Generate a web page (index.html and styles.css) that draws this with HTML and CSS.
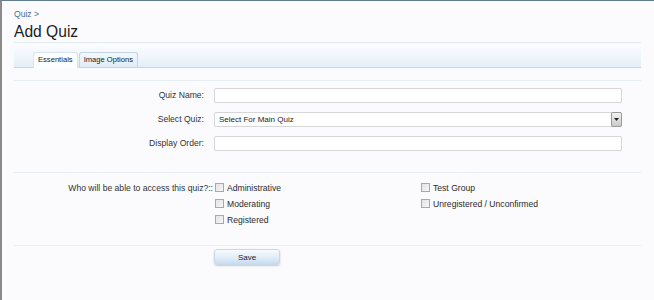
FILE: index.html
```html
<!DOCTYPE html>
<html lang="en">
<head>
    <meta charset="UTF-8">
    <title>Add Quiz</title>
    <link rel="stylesheet" href="styles.css">
</head>
<body>
    <div class="page">
        <div class="breadcrumb"><a href="#">Quiz</a> &gt;</div>
        <h1 class="title">Add Quiz</h1>

        <div class="tab-strip">
            <ul class="tabs">
                <li class="tab active">Essentials</li>
                <li class="tab">Image Options</li>
            </ul>
        </div>

        <form class="quiz-form">
            <div class="fields">
                <div class="row">
                    <label class="label">Quiz Name:</label>
                    <input class="text-input" type="text">
                </div>
                <div class="row">
                    <label class="label">Select Quiz:</label>
                    <div class="select-wrap">
                        <select class="select">
                            <option>Select For Main Quiz</option>
                        </select>
                        <span class="select-arrow">
                            <svg width="5" height="3" viewBox="0 0 5 3"><path d="M0 0h5L2.5 3z" fill="#222"/></svg>
                        </span>
                    </div>
                </div>
                <div class="row">
                    <label class="label">Display Order:</label>
                    <input class="text-input" type="text">
                </div>
            </div>

            <div class="access">
                <div class="label access-label">Who will be able to access this quiz?::</div>
                <div class="groups">
                    <label class="group"><input type="checkbox" class="check">Administrative</label>
                    <label class="group"><input type="checkbox" class="check">Test Group</label>
                    <label class="group"><input type="checkbox" class="check">Moderating</label>
                    <label class="group"><input type="checkbox" class="check">Unregistered / Unconfirmed</label>
                    <label class="group"><input type="checkbox" class="check">Registered</label>
                </div>
            </div>

            <div class="actions">
                <button type="button" class="save-button">Save</button>
            </div>
        </form>
    </div>
</body>
</html>
```

FILE: styles.css
```css
* {
    margin: 0;
    padding: 0;
    box-sizing: border-box;
}

body {
    font-family: "Liberation Sans", Arial, sans-serif;
    font-size: 8.6px;
    color: #333;
    background: #fbfbfd;
    border-left: 2px solid #8a8a8a;
    border-top: 1px solid #5f7f8e;
    min-height: 100vh;
}

.page {
    padding: 0 13px 0 12px;
}

.breadcrumb {
    padding-top: 8px;
    height: 19px;
    font-size: 8.6px;
    color: #47709a;
}

.breadcrumb a {
    color: #47709a;
    text-decoration: none;
}

.title {
    font-size: 15.6px;
    font-weight: normal;
    color: #1d1d1d;
    line-height: 23px;
    height: 23px;
    border-bottom: 1px solid #e3eaf0;
}

.tab-strip {
    margin-top: 1px;
    height: 24px;
    padding-top: 8px;
    background: linear-gradient(to bottom, #fbfcfe 0%, #eef5fb 60%, #e2eef8 100%);
    border-bottom: 1px solid #c5d7e6;
}

.tabs {
    list-style: none;
    display: flex;
    padding-left: 19px;
    height: 15px;
}

.tab {
    height: 15px;
    padding: 0 4px;
    line-height: 14px;
    font-size: 7.6px;
    color: #222;
    background: linear-gradient(to bottom, #f3f8fc, #dfecf7);
    border: 1px solid #c2d5e5;
    border-bottom: none;
    border-radius: 3px 3px 0 0;
    margin-right: 1px;
}

.tab.active {
    background: #fdfeff;
    height: 16px;
    border-color: #d7e3ed;
}

.quiz-form {
    margin-top: 12px;
    border-top: 1px solid #e6eef4;
}

.fields {
    padding: 2px 0 17px;
    border-bottom: 1px solid #e6eef4;
}

.row {
    display: flex;
    align-items: center;
    height: 24px;
}

.label {
    width: 200px;
    padding-right: 10px;
    text-align: right;
    color: #333;
    flex-shrink: 0;
}

.text-input,
.select-wrap {
    width: 408px;
    height: 15px;
}

.text-input {
    border: 1px solid #d6d6d6;
    border-radius: 2px;
    background: #fff;
}

.select-wrap {
    position: relative;
}

.select {
    appearance: none;
    width: 100%;
    height: 15px;
    border: 1px solid #d6d6d6;
    border-radius: 2px;
    background: #fff;
    font-family: inherit;
    font-size: 8px;
    color: #222;
    padding-left: 4px;
}

.select-arrow {
    position: absolute;
    right: 0;
    top: 0;
    width: 11px;
    height: 15px;
    display: flex;
    align-items: center;
    justify-content: center;
    border: 1px solid #9a9a9a;
    border-radius: 2px;
    background: linear-gradient(to bottom, #f2f2f2, #c9c9c9);
}

.access {
    display: flex;
    padding: 8px 0 19px;
    border-bottom: 1px solid #e6eef4;
}

.access-label {
    padding-top: 2px;
    padding-right: 2px;
    width: 201px;
}

.groups {
    display: grid;
    grid-template-columns: 206px auto;
    row-gap: 3px;
}

.group {
    display: flex;
    align-items: center;
    height: 13px;
    color: #2a2a2a;
    font-size: 8.6px;
}

.check {
    appearance: none;
    width: 9px;
    height: 9px;
    margin-right: 3px;
    border: 1px solid #a9a9a9;
    background: linear-gradient(to bottom right, #e4e4e4, #f7f7f7);
}

.actions {
    padding: 3px 0 0 200px;
}

.save-button {
    width: 66px;
    height: 16px;
    border: 1px solid #c7d9e8;
    border-radius: 3px;
    background: linear-gradient(to bottom, #f7fbfe 0%, #e3eef8 50%, #c6dcef 100%);
    box-shadow: 0 1px 2px rgba(0, 0, 0, 0.2);
    font-family: inherit;
    font-size: 8px;
    color: #222;
    cursor: pointer;
}
```
